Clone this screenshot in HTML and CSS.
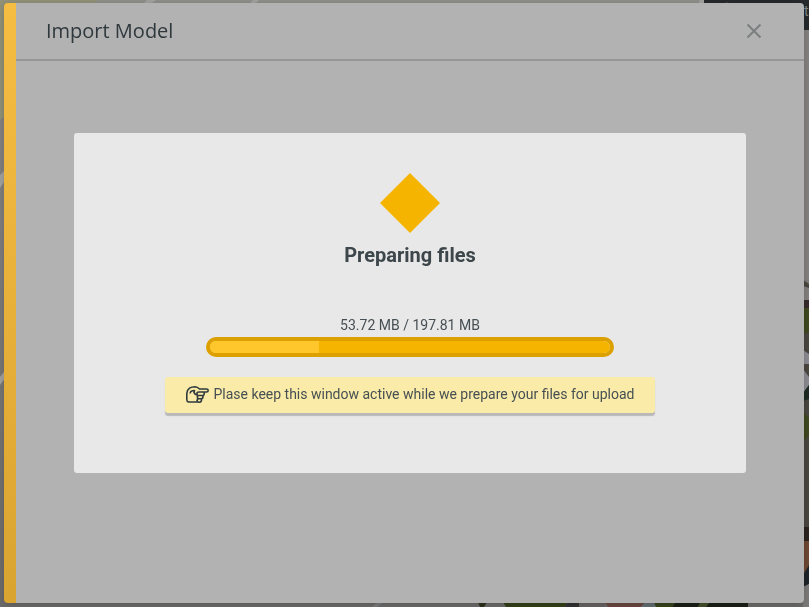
FILE: index.html
```html
<!DOCTYPE html>
<html lang="en">
<head>
<meta charset="utf-8">
<meta name="viewport" content="width=device-width, initial-scale=1">
<title>Import Model</title>
<link rel="stylesheet" href="styles.css">
</head>
<body>
<svg class="backdrop" viewBox="0 0 809 607" preserveAspectRatio="none" aria-hidden="true">
  <defs>
    <linearGradient id="ground" x1="0" y1="0" x2="0" y2="1">
      <stop offset="0" stop-color="#90908a"/>
      <stop offset=".2" stop-color="#858383"/>
      <stop offset="1" stop-color="#6d6c6b"/>
    </linearGradient>
  </defs>
  <rect width="809" height="607" fill="url(#ground)"/>
  <path d="M0 0H98L90 6 6 115 0 120Z" fill="#929279"/>
  <path d="M147 0h9l-6 5h-8zM253 0h6l-5 5h-6zM700 0h6v4h-8zM0 175l6-6v10l-6 9zM0 377l6-8v8l-6 8z" fill="#a2a2a1"/>
  <path d="M372 607l4-4h6l-4 4z" fill="#7c7b7b"/>
  <path d="M704 0H809V30H704Z" fill="#262a2d"/>
  <path d="M722 4q5-3 9 0z" fill="#555"/>
  <text x="804" y="16" class="backdrop-text">t</text>
  <path d="M803 30h6v250h-6z" fill="#858280"/>
  <path d="M803 280l6 4v300l-6 3z" fill="#4b4740"/>
  <path d="M803 286l6 2v12h-6z" fill="#858081"/>
  <path d="M803 300h6v8h-6z" fill="#392c2c"/>
  <path d="M803 308h6v24l-6 2zM803 412l6 6v18l-6 6z" fill="#40491f"/>
  <path d="M803 350l6 4v10h-6zM803 369l6 8v8l-6 8z" fill="#8d8c93"/>
  <path d="M803 393l6-8v14l-6 2z" fill="#1d2b21"/>
  <path d="M803 527h6v14h-6z" fill="#2c231e"/>
  <path d="M803 541h6v26l-6 8z" fill="#704832"/>
  <path d="M809 565v19l-6 3v-12z" fill="#1d252b"/>
  <path d="M803 587l6-3v23h-6z" fill="#7d7b79"/>
  <path d="M478 602h9l-3 5h-4z" fill="#2d321b"/>
  <path d="M503 602h64l-2 5h-59z" fill="#354019"/>
  <path d="M567 602h12v5h-14z" fill="#343333"/>
  <path d="M579 602h26v5h-26z" fill="#686464"/>
  <path d="M605 602h40l-4 5h-33z" fill="#6c4842"/>
  <path d="M645 602h9l4 5h-17z" fill="#656e73"/>
  <path d="M654 602h22l-4 5h-16z" fill="#39451c"/>
  <path d="M676 602h72v5h-76z" fill="#1b2016"/>
  <path d="M700 602h10l-4 5h-8z" fill="#46502a"/>
</svg>
<main class="dialog" role="dialog" aria-labelledby="dialog-title">
  <header class="dialog-header">
    <h1 class="dialog-title" id="dialog-title">Import Model</h1>
    <button class="close" type="button" aria-label="Close">
      <svg width="16" height="16" viewBox="0 0 16 16" aria-hidden="true"><path d="M1.500 1.500l13 13M14.500 1.500l-13 13"/></svg>
    </button>
  </header>
  <div class="dialog-body">
    <section class="panel">
      <svg class="diamond" width="60" height="60" viewBox="0 0 60 60" aria-hidden="true"><path d="M30 0L60 30 30 60 0 30Z"/></svg>
      <h2 class="panel-title">Preparing files</h2>
      <label class="amount" for="progress">53.72 MB / 197.81 MB</label>
      <progress class="bar" id="progress" max="197.81" value="53.72"></progress>
      <p class="notice">
        <svg class="hand" width="24" height="20" viewBox="0 0 24 20" aria-hidden="true">
          <path d="M12.500 18H3.500Q1.800 17.500 1.800 15.500V9.500Q2 6 4.500 4.200Q6.500 2.800 10 2.800Q12.500 3 14.500 5H21.500Q23.200 5 23.200 6.500T21.500 8H14"/>
          <path d="M5 9.500Q5.300 7.200 7.500 6.800L9.500 6.500 9 8.500Q10.500 11.300 12 10.500"/>
          <path d="M14 8Q11.800 8 12 9.800T13.500 11.500H18Q19.300 11.200 19.200 9.500V8M13 11.500Q11.800 13 12.500 14Q13 14.800 14 14.800H16.500Q18.200 14.500 18 11.500M13 14.800Q11.500 16.500 12.500 17.500Q13 18.300 14.500 18.200Q16.800 18 16.500 14.800"/>
        </svg>
        <span>Plase keep this window active while we prepare your files for upload</span>
      </p>
    </section>
  </div>
</main>
</body>
</html>
```
FILE: styles.css
```css
* {
  box-sizing: border-box;
}

body {
  display: flex;
  min-height: 100vh;
  margin: 0;
  padding: 3px 5px 4px 4px;
  background: #777;
  color: #464f53;
  font: 14px/20px Roboto, sans-serif;
}

.backdrop {
  position: fixed;
  inset: 0;
  z-index: -1;
  width: 100%;
  height: 100%;
}

.backdrop-text {
  fill: #85878a;
  font: 14px Roboto, sans-serif;
}

.dialog {
  position: relative;
  display: flex;
  flex: 1;
  flex-direction: column;
  padding-left: 12px;
  overflow: hidden;
  border-radius: 4px;
  background: linear-gradient(#f5bd42, #daa431) left / 12px 100% no-repeat #b2b2b2;
  box-shadow: 0 2px 8px rgba(0, 0, 0, 0.2);
}

.dialog-header {
  display: flex;
  align-items: center;
  justify-content: space-between;
  padding: 14px 42px 14px 30px;
  border-bottom: 2px solid #969696;
}

.dialog-title {
  margin: 0;
  color: #2f383c;
  font: 20px/28px "Open Sans", sans-serif;
}

.close {
  display: flex;
  padding: 0;
  border: 0;
  background: none;
}

.close path {
  fill: none;
  stroke: #7b7f7f;
  stroke-width: 2;
}

.dialog-body {
  padding: 72px 58px;
}

.panel {
  display: flex;
  flex-direction: column;
  align-items: center;
  padding: 40px 20px 60px;
  border-radius: 3px;
  background: #e8e8e8;
}

.diamond {
  fill: #f5b400;
}

.panel-title {
  margin: 8px 0 46px;
  color: #3d464a;
  font-size: 20px;
  font-weight: 700;
  line-height: 28px;
}

.amount {
  margin-bottom: 2px;
}

.bar {
  appearance: none;
  width: 100%;
  max-width: 408px;
  height: 20px;
  overflow: hidden;
  border: 4px solid #dca100;
  border-radius: 10px;
  background: #f5b400;
}

.bar::-webkit-progress-bar {
  background: #f5b400;
}

.bar::-webkit-progress-value {
  background: #ffc72c;
}

.notice {
  display: flex;
  align-items: center;
  gap: 4px;
  margin: 20px 0 0;
  padding: 7px 20px 9px;
  border-radius: 3px;
  background: #fbeba8;
  box-shadow: 0 3px 1px #b9b9b9;
}

.hand {
  fill: none;
  stroke: #303b3e;
  stroke-width: 1.6;
  stroke-linejoin: round;
}
```
